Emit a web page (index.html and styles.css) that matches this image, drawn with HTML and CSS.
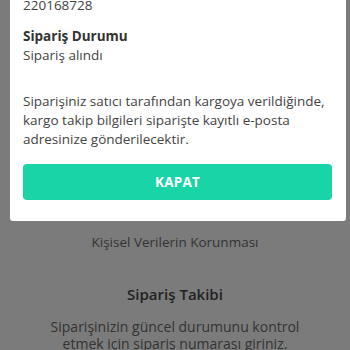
FILE: index.html
```html
<!DOCTYPE html>
<html lang="tr">
<head>
<meta charset="utf-8">
<link rel="stylesheet" href="styles.css">
</head>
<body>
<div class="page">
  <div class="modal">
    <div class="field field-first">
      <div class="label">Sipariş Numarası</div>
      <div class="value">220168728</div>
    </div>
    <div class="field">
      <div class="label">Sipariş Durumu</div>
      <div class="value">Sipariş alındı</div>
    </div>
    <p class="info">Siparişiniz satıcı tarafından kargoya verildiğinde, kargo takip bilgileri siparişte kayıtlı e-posta adresinize gönderilecektir.</p>
    <button class="close">KAPAT</button>
  </div>
  <div class="link">Kişisel Verilerin Korunması</div>
  <h2 class="title">Sipariş Takibi</h2>
  <p class="desc">Siparişinizin güncel durumunu kontrol etmek için sipariş numarası giriniz.</p>
</div>
</body>
</html>
```
FILE: styles.css
```css
html, body {
  margin: 0;
  padding: 0;
  background: #7b7b7b;
  overflow: hidden;
}
body {
  font-family: "Open Sans", "Noto Sans", sans-serif;
  color: #3a3a3a;
}
.page {
  display: flex;
  flex-direction: column;
}
.modal {
  margin: -35px 4px 0 10px;
  background: #fff;
  border-radius: 0 0 3px 3px;
  padding: 12px 14px 21px 13px;
  display: flex;
  flex-direction: column;
}
.field {
  margin-bottom: 14px;
}
.field-first {
  margin-bottom: 12px;
}
.label {
  font-weight: 700;
  font-size: 13.5px;
  line-height: 19px;
  color: #333;
}
.value {
  font-size: 13.5px;
  line-height: 19px;
  color: #444;
}
.info {
  margin: 13px 0 15px;
  font-size: 13.5px;
  line-height: 19px;
  color: #444;
}
.close {
  height: 36px;
  border: none;
  border-radius: 4px;
  background: #19d4a6;
  color: #fff;
  font-family: inherit;
  font-weight: 700;
  font-size: 13.5px;
  letter-spacing: 0.2px;
  padding: 0;
}
.link {
  text-align: center;
  font-size: 13.5px;
  line-height: 18px;
  margin-top: 12px;
  color: #333;
}
.title {
  text-align: center;
  margin: 33px 0 0;
  font-size: 15px;
  line-height: 20px;
  font-weight: 600;
  color: #222;
}
.desc {
  text-align: center;
  margin: 13.5px 40px 0;
  font-size: 14px;
  line-height: 17px;
  color: #333;
}
```
